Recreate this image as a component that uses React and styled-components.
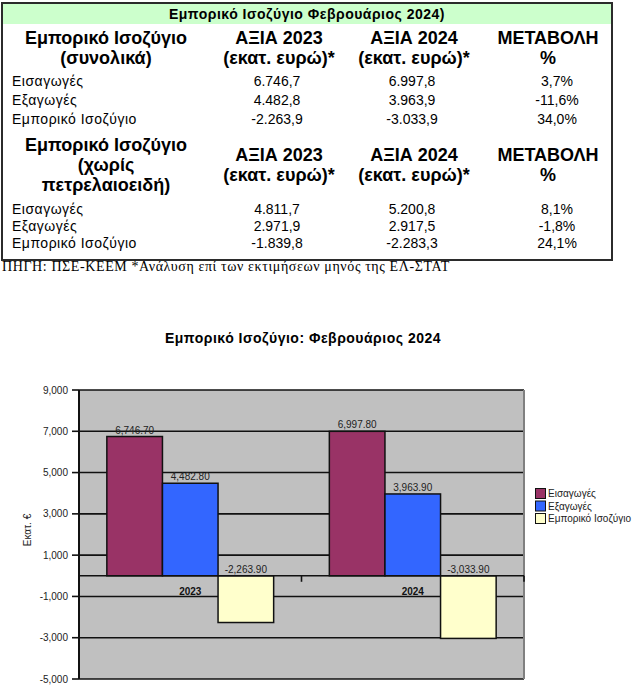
import React from "react";
import styled, { createGlobalStyle } from "styled-components";

const Global = createGlobalStyle`
  html, body { margin: 0; padding: 0; background: #fff; }
  body { font-family: "Liberation Sans", Arial, sans-serif; color: #000; }
`;

const Page = styled.div`
  width: 635px;
  height: 698px;
  overflow: hidden;
`;

const Table = styled.div`
  margin: 2px 0 0 1px;
  width: 612px;
  box-sizing: border-box;
  border: 2px solid #2b2b2b;
  padding-bottom: 7px;
  display: grid;
  grid-template-columns: 206px 140px 130px 1fr;
  grid-template-rows: 20px 48px 19px 19px 19px 72px 17px 17px 17px;
  font-family: "Liberation Sans", Arial, sans-serif;
`;

const TitleRow = styled.div`
  grid-column: 1 / -1;
  background: #ccffcc;
  font-weight: bold;
  font-size: 14px;
  letter-spacing: 0.5px;
  line-height: 20px;
  text-align: center;
`;

const HeadCell = styled.div`
  display: flex;
  align-items: center;
  justify-content: center;
  text-align: center;
  font-weight: bold;
  font-size: 18px;
  line-height: 20px;
  padding: ${(p) => p.$pad || "0"};
  white-space: nowrap;
`;

const Label = styled.div`
  font-size: 14px;
  letter-spacing: 0.5px;
  line-height: ${(p) => p.$lh}px;
  padding-left: 9px;
  white-space: nowrap;
`;

const Value = styled.div`
  font-size: 14px;
  line-height: ${(p) => p.$lh}px;
  text-align: center;
  padding: ${(p) => p.$pad || "0"};
  white-space: nowrap;
`;

const Source = styled.div`
  margin-left: 2px;
  font-family: "Liberation Serif", "Times New Roman", serif;
  font-size: 14px;
  letter-spacing: 0.6px;
  line-height: 12px;
  white-space: nowrap;
`;

const ChartTitle = styled.div`
  margin-top: 57px;
  width: 606px;
  text-align: center;
  font-weight: bold;
  font-size: 14px;
  letter-spacing: 0.5px;
  line-height: 16px;
`;

const ChartSvg = styled.svg`
  display: block;
  margin-top: 4px;
  font-family: "Liberation Sans", Arial, sans-serif;
`;

const valuePads = ["0 4px 0 0", "0 4px 0 0", "0 0 0 24px"];
const headPads = ["0", "0", "0 0 0 6px"];

const section1 = [
  ["Εισαγωγές", "6.746,7", "6.997,8", "3,7%"],
  ["Εξαγωγές", "4.482,8", "3.963,9", "-11,6%"],
  ["Εμπορικό Ισοζύγιο", "-2.263,9", "-3.033,9", "34,0%"],
];
const section2 = [
  ["Εισαγωγές", "4.811,7", "5.200,8", "8,1%"],
  ["Εξαγωγές", "2.971,9", "2.917,5", "-1,8%"],
  ["Εμπορικό Ισοζύγιο", "-1.839,8", "-2.283,3", "24,1%"],
];

function HeaderRow({ first }) {
  return (
    <>
      <HeadCell>{first}</HeadCell>
      {["ΑΞΙΑ 2023", "ΑΞΙΑ 2024"].map((t, i) => (
        <HeadCell key={t} $pad={headPads[i]}>
          {t}
          <br />
          (εκατ. ευρώ)*
        </HeadCell>
      ))}
      <HeadCell $pad={headPads[2]}>
        ΜΕΤΑΒΟΛΗ
        <br />%
      </HeadCell>
    </>
  );
}

function DataRows({ rows, lh }) {
  return rows.map((r) => (
    <React.Fragment key={r[0]}>
      <Label $lh={lh}>{r[0]}</Label>
      {r.slice(1).map((v, i) => (
        <Value key={i} $lh={lh} $pad={valuePads[i]}>
          {v}
        </Value>
      ))}
    </React.Fragment>
  ));
}

// chart geometry (svg coords; svg top = page y 350)
const PL = 79;
const PR = 524;
const PT = 40;
const PB = 329;
const yv = (v) => PT + ((9000 - v) * (PB - PT)) / 14000;
const series = [
  { name: "Εισαγωγές", color: "#993366" },
  { name: "Εξαγωγές", color: "#3366ff" },
  { name: "Εμπορικό Ισοζύγιο", color: "#ffffcc" },
];
const data = [
  { cat: "2023", vals: [6746.7, 4482.8, -2263.9], labels: ["6,746.70", "4,482.80", "-2,263.90"] },
  { cat: "2024", vals: [6997.8, 3963.9, -3033.9], labels: ["6,997.80", "3,963.90", "-3,033.90"] },
];
const ticks = [9000, 7000, 5000, 3000, 1000, -1000, -3000, -5000];
const fmt = (v) => (v < 0 ? "-" : "") + Math.abs(v).toLocaleString("en-US");

function Chart() {
  const catW = (PR - PL) / 2;
  const barW = 55.6;
  const zero = yv(0);
  return (
    <ChartSvg width="635" height="348" viewBox="0 0 635 348">
      <rect x={PL} y={PT} width={PR - PL} height={PB - PT} fill="#c0c0c0" />
      {ticks.map((t) => (
        <g key={t}>
          <line x1={PL} x2={PR} y1={yv(t)} y2={yv(t)} stroke="#111" strokeWidth="1.6" />
          <line x1={72} x2={PL} y1={yv(t)} y2={yv(t)} stroke="#111" strokeWidth="1.6" />
          <text x={68} y={yv(t) + 3.5} fontSize="10" textAnchor="end" fill="#222">
            {fmt(t)}
          </text>
        </g>
      ))}
      <line x1={PR} x2={PR} y1={PT} y2={PB} stroke="#808080" strokeWidth="2" />
      <line x1={PL} x2={PL} y1={PT} y2={PB} stroke="#111" strokeWidth="2" />
      {data.map((d, i) => {
        const start = PL + i * catW + (catW - barW * 3) / 2;
        return (
          <g key={d.cat}>
            {d.vals.map((v, j) => {
              const x = start + j * barW;
              const top = v >= 0 ? yv(v) : zero;
              const h = Math.abs(yv(v) - zero);
              const ly = (v >= 0 ? yv(v) : zero) - 3;
              return (
                <g key={j}>
                  <rect x={x} y={top} width={barW} height={h} fill={series[j].color} stroke="#111" strokeWidth="1.5" />
                  <text x={x + barW / 2} y={ly} fontSize="10" textAnchor="middle" fill="#222">
                    {d.labels[j]}
                  </text>
                </g>
              );
            })}
            <text x={PL + i * catW + catW / 2} y={zero + 19} fontSize="10" fontWeight="bold" textAnchor="middle" fill="#111">
              {d.cat}
            </text>
          </g>
        );
      })}
      <line x1={PL} x2={PR} y1={zero} y2={zero} stroke="#111" strokeWidth="1.6" />
      {[PL, PL + catW, PR].map((x) => (
        <line key={x} x1={x} x2={x} y1={zero} y2={zero + 6} stroke="#111" strokeWidth="1.6" />
      ))}
      <text
        x={31}
        y={180}
        fontSize="10"
        textAnchor="middle"
        fill="#222"
        transform="rotate(-90 31 180)"
      >
        Εκατ. €
      </text>
      {series.map((s, k) => (
        <g key={s.name}>
          <rect x={535.5} y={138.5 + k * 12.5} width={10} height={10} fill={s.color} stroke="#111" strokeWidth="1" />
          <text x={548} y={147 + k * 12.5} fontSize="10" fill="#222">
            {s.name}
          </text>
        </g>
      ))}
    </ChartSvg>
  );
}

export default function App() {
  return (
    <Page>
      <Global />
      <Table>
        <TitleRow>Εμπορικό Ισοζύγιο Φεβρουάριος 2024)</TitleRow>
        <HeaderRow
          first={
            <>
              Εμπορικό Ισοζύγιο
              <br />
              (συνολικά)
            </>
          }
        />
        <DataRows rows={section1} lh={19} />
        <HeaderRow
          first={
            <>
              Εμπορικό Ισοζύγιο
              <br />
              (χωρίς
              <br />
              πετρελαιοειδή)
            </>
          }
        />
        <DataRows rows={section2} lh={17} />
      </Table>
      <Source>ΠΗΓΗ: ΠΣΕ-ΚΕΕΜ *Ανάλυση επί των εκτιμήσεων μηνός της ΕΛ-ΣΤΑΤ</Source>
      <ChartTitle>Εμπορικό Ισοζύγιο: Φεβρουάριος 2024</ChartTitle>
      <Chart />
    </Page>
  );
}
